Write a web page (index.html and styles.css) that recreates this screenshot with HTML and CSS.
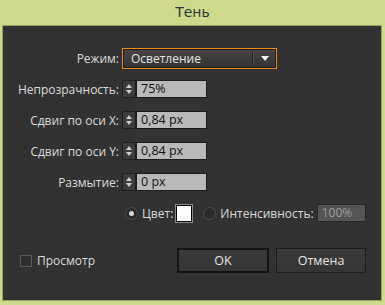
FILE: index.html
```html
<!DOCTYPE html>
<html lang="ru">
<head>
  <meta charset="UTF-8">
  <title>Тень</title>
  <link rel="stylesheet" href="styles.css">
</head>
<body>
  <div class="titlebar">Тень</div>

  <div class="panel">
    <div class="form">
      <div class="row row-select">
        <label class="lbl">Режим:</label>
        <div class="select">
          <span class="select-text">Осветление</span>
          <span class="select-div"></span>
          <span class="select-arrow"></span>
        </div>
      </div>

      <div class="row">
        <label class="lbl">Непрозрачность:</label>
        <div class="spin"><span class="up"></span><span class="down"></span></div>
        <div class="field">75%</div>
      </div>

      <div class="row">
        <label class="lbl">Сдвиг по оси X:</label>
        <div class="spin"><span class="up"></span><span class="down"></span></div>
        <div class="field">0,84 px</div>
      </div>

      <div class="row">
        <label class="lbl">Сдвиг по оси Y:</label>
        <div class="spin"><span class="up"></span><span class="down"></span></div>
        <div class="field">0,84 px</div>
      </div>

      <div class="row">
        <label class="lbl">Размытие:</label>
        <div class="spin"><span class="up"></span><span class="down"></span></div>
        <div class="field">0 px</div>
      </div>

      <div class="row row-radio">
        <span class="radio checked"></span>
        <span class="rtext">Цвет:</span>
        <span class="swatch"></span>
        <span class="radio second"></span>
        <span class="rtext">Интенсивность:</span>
        <div class="field dim">100%</div>
      </div>
    </div>

    <div class="footer">
      <div class="preview">
        <span class="check"></span>
        <span>Просмотр</span>
      </div>
      <div class="buttons">
        <button class="btn default">OK</button>
        <button class="btn">Отмена</button>
      </div>
    </div>
  </div>
</body>
</html>
```

FILE: styles.css
```css
body {
  margin: 0;
  width: 385px;
  height: 305px;
  background: #cfd98c;
  font-family: "Open Sans", "Liberation Sans", sans-serif;
  font-size: 12px;
  overflow: hidden;
}

.titlebar {
  height: 25px;
  line-height: 24px;
  text-align: center;
  font-family: "DejaVu Sans", sans-serif;
  font-size: 14px;
  color: #2a3838;
}

.panel {
  margin: 0 3px 0 2px;
  height: 276px;
  box-sizing: border-box;
  background: #323232;
  border: 1px solid #9aa068;
  padding-top: 22px;
  color: #dcdcdc;
}

.form {
  display: flex;
  flex-direction: column;
  gap: 13px;
}

.row {
  display: flex;
  align-items: center;
  height: 18px;
}

.row-select {
  height: 21px;
  margin-bottom: -2px;
}

.lbl {
  width: 116px;
  text-align: right;
  padding-right: 3px;
  flex-shrink: 0;
}

.select {
  width: 153px;
  height: 19px;
  border: 1px solid #f28a1d;
  box-shadow: inset 0 0 0 1px #1c1c1c;
  background: linear-gradient(#464646, #333333);
  display: flex;
  align-items: center;
}

.select-text {
  flex: 1;
  padding-left: 8px;
  color: #e6e6e6;
}

.select-div {
  width: 1px;
  height: 13px;
  background: #1e1e1e;
  border-right: 1px solid #555;
  margin-right: 7px;
}

.select-arrow {
  width: 0;
  height: 0;
  border-left: 4px solid transparent;
  border-right: 4px solid transparent;
  border-top: 5px solid #f0f0f0;
  margin-right: 7px;
}

.spin {
  width: 14px;
  height: 18px;
  box-sizing: border-box;
  border: 1px solid #1e1e1e;
  background: #3c3c3c;
  display: flex;
  flex-direction: column;
  align-items: center;
  justify-content: space-evenly;
}

.spin .up,
.spin .down {
  width: 0;
  height: 0;
  border-left: 3px solid transparent;
  border-right: 3px solid transparent;
}

.spin .up { border-bottom: 4px solid #cfcfcf; }
.spin .down { border-top: 4px solid #cfcfcf; }

.field {
  width: 71px;
  height: 18px;
  box-sizing: border-box;
  border: 1px solid #1c1c1c;
  background: #b9b9b9;
  color: #111;
  line-height: 16px;
  padding-left: 4px;
  font-size: 12.5px;
}

.row-radio {
  height: 20px;
  margin-top: -1px;
  padding-left: 122px;
}

.radio {
  width: 11px;
  height: 11px;
  border-radius: 50%;
  background: #2b2b2b;
  border: 1px solid #4e4e4e;
  position: relative;
}

.radio.checked::after {
  content: "";
  position: absolute;
  left: 3px;
  top: 3px;
  width: 5px;
  height: 5px;
  border-radius: 50%;
  background: #d8d8d8;
}

.radio.second {
  margin-left: 11px;
}

.rtext {
  margin-left: 4px;
  margin-right: 3px;
}

.swatch {
  width: 14px;
  height: 15px;
  background: #fff;
  border: 1px solid #000;
  box-shadow: 0 0 0 1px #8a8a8a;
}

.field.dim {
  width: 49px;
  background: #555;
  color: #9c9c9c;
  border-color: #262626;
  padding-left: 4px;
  font-size: 12px;
}

.footer {
  display: flex;
  align-items: center;
  justify-content: space-between;
  margin-top: 25px;
  padding: 0 15px 0 17px;
}

.preview {
  display: flex;
  align-items: center;
  gap: 5px;
}

.check {
  width: 10px;
  height: 10px;
  background: #2e2e2e;
  border: 1px solid #5a5a5a;
}

.buttons {
  display: flex;
  gap: 7px;
}

.btn {
  width: 90px;
  height: 25px;
  font-family: "Open Sans", "Liberation Sans", sans-serif;
  font-size: 12.5px;
  color: #e6e6e6;
  background: linear-gradient(#3a3a3a, #353535);
  border: 1px solid #1e1e1e;
  padding: 0;
}

.btn.default {
  width: 92px;
  border: 2px solid #141414;
}
```
